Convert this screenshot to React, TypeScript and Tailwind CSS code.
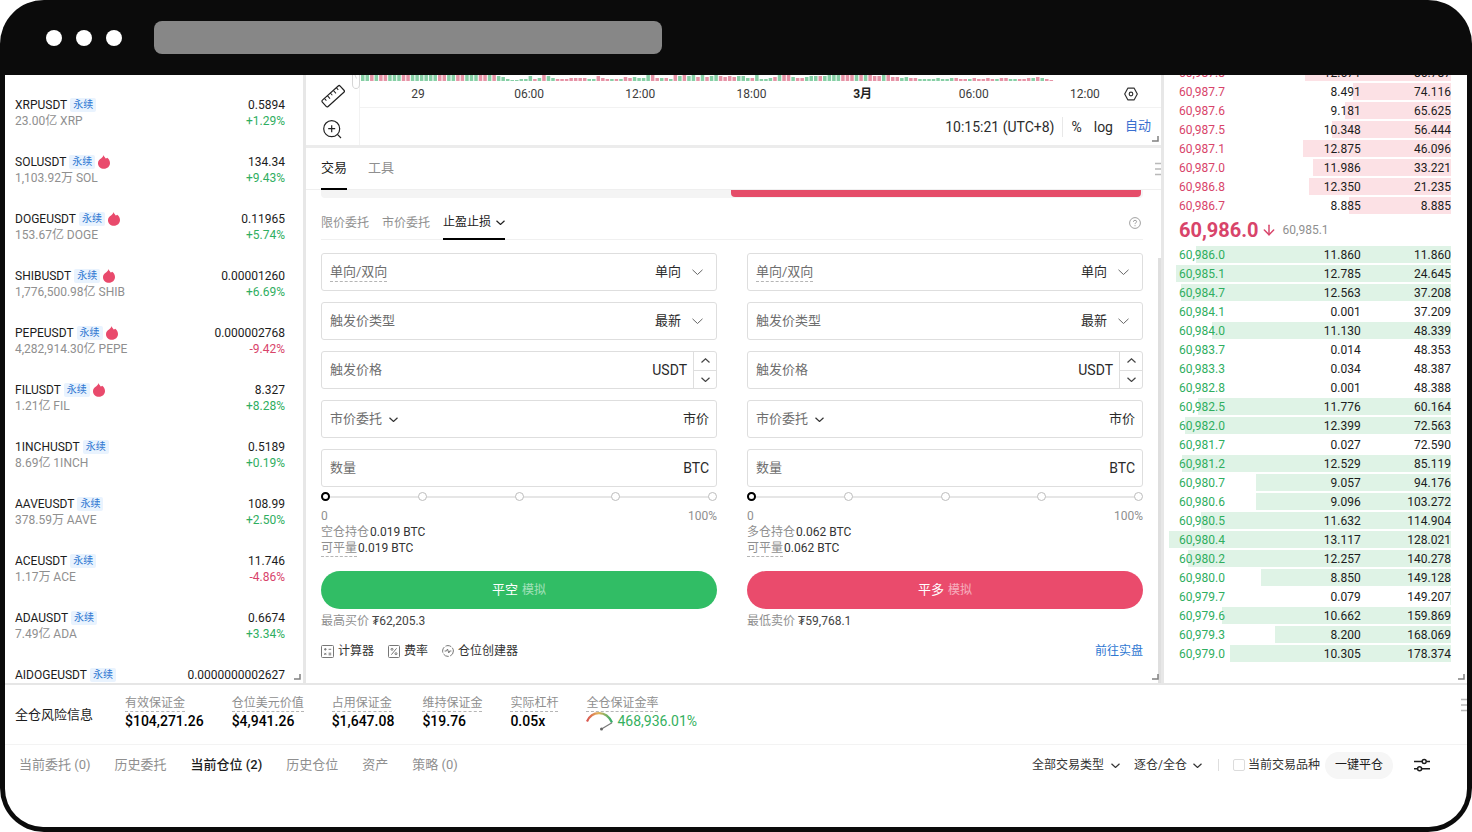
import { useId, useState } from 'react'
import { ArrowDown } from 'lucide-react'

interface Ticker {
  symbol: string
  volume?: string
  price: string
  change?: string
  hot?: boolean
}

const TICKERS: Ticker[] = [
  { symbol: 'XRPUSDT', volume: '23.00亿 XRP', price: '0.5894', change: '+1.29%' },
  { symbol: 'SOLUSDT', volume: '1,103.92万 SOL', price: '134.34', change: '+9.43%', hot: true },
  { symbol: 'DOGEUSDT', volume: '153.67亿 DOGE', price: '0.11965', change: '+5.74%', hot: true },
  { symbol: 'SHIBUSDT', volume: '1,776,500.98亿 SHIB', price: '0.00001260', change: '+6.69%', hot: true },
  { symbol: 'PEPEUSDT', volume: '4,282,914.30亿 PEPE', price: '0.000002768', change: '-9.42%', hot: true },
  { symbol: 'FILUSDT', volume: '1.21亿 FIL', price: '8.327', change: '+8.28%', hot: true },
  { symbol: '1INCHUSDT', volume: '8.69亿 1INCH', price: '0.5189', change: '+0.19%' },
  { symbol: 'AAVEUSDT', volume: '378.59万 AAVE', price: '108.99', change: '+2.50%' },
  { symbol: 'ACEUSDT', volume: '1.17万 ACE', price: '11.746', change: '-4.86%' },
  { symbol: 'ADAUSDT', volume: '7.49亿 ADA', price: '0.6674', change: '+3.34%' },
  { symbol: 'AIDOGEUSDT', price: '0.0000000002627' },
]

type Level = [price: string, amount: string, total: string]

const ASKS: Level[] = [
  ['60,987.8', '12.671', '86.787'],
  ['60,987.7', '8.491', '74.116'],
  ['60,987.6', '9.181', '65.625'],
  ['60,987.5', '10.348', '56.444'],
  ['60,987.1', '12.875', '46.096'],
  ['60,987.0', '11.986', '33.221'],
  ['60,986.8', '12.350', '21.235'],
  ['60,986.7', '8.885', '8.885'],
]

const BIDS: Level[] = [
  ['60,986.0', '11.860', '11.860'],
  ['60,985.1', '12.785', '24.645'],
  ['60,984.7', '12.563', '37.208'],
  ['60,984.1', '0.001', '37.209'],
  ['60,984.0', '11.130', '48.339'],
  ['60,983.7', '0.014', '48.353'],
  ['60,983.3', '0.034', '48.387'],
  ['60,982.8', '0.001', '48.388'],
  ['60,982.5', '11.776', '60.164'],
  ['60,982.0', '12.399', '72.563'],
  ['60,981.7', '0.027', '72.590'],
  ['60,981.2', '12.529', '85.119'],
  ['60,980.7', '9.057', '94.176'],
  ['60,980.6', '9.096', '103.272'],
  ['60,980.5', '11.632', '114.904'],
  ['60,980.4', '13.117', '128.021'],
  ['60,980.2', '12.257', '140.278'],
  ['60,980.0', '8.850', '149.128'],
  ['60,979.7', '0.079', '149.207'],
  ['60,979.6', '10.662', '159.869'],
  ['60,979.3', '8.200', '168.069'],
  ['60,979.0', '10.305', '178.374'],
]

const TIMES = ['29', '06:00', '12:00', '18:00', '3月', '06:00', '12:00']

// one letter per candle for the colour, one digit for the visible height
const VOLUME_COLORS =
  'ggrgrrgggrrggggggrrggrrgggrrgrg' +
  'gggggggrgrggrrrrrrrggrrrgrgrrggggrrgrgrgrggrgrggrrrr' +
  'gggrggggrgrrgrrgggrggggrrrgrgrrrgrrrggrrggggggggrrrgrrrrrgrrggrrrgrgrr'
const VOLUME_HEIGHTS =
  '6666666666666666666666666666665' +
  '4211225236532223333225322224343366333265656464565454' +
  '5533622346664334555566666666665566443433222232233222322322332222334321'

const RISKS = [
  { label: '有效保证金', value: '$104,271.26' },
  { label: '仓位美元价值', value: '$4,941.26' },
  { label: '占用保证金', value: '$1,647.08' },
  { label: '维持保证金', value: '$19.76' },
  { label: '实际杠杆', value: '0.05x' },
]

const POSITION_TABS = ['当前委托 (0)', '历史委托', '当前仓位 (2)', '历史仓位', '资产', '策略 (0)']

function Caret({ up, wide, className }: { up?: boolean; wide?: boolean; className?: string }) {
  const w = wide ? 11 : 9
  const drop = wide ? 5 : 4
  const d = up ? `M.5 ${drop + 0.5}L${w / 2} .8L${w - 0.5} ${drop + 0.5}` : `M.5 .8L${w / 2} ${drop + 0.5}L${w - 0.5} .8`
  return (
    <svg
      className={className}
      width={w}
      height={drop + 1}
      viewBox={`0 0 ${w} ${drop + 1}`}
      fill="none"
      stroke="currentColor"
      strokeWidth={wide ? 1 : 1.2}
      aria-hidden="true"
    >
      <path d={d} />
    </svg>
  )
}

function Flame() {
  return (
    <svg width="12" height="14" viewBox="0 0 12 14" fill="#e94a6c" aria-hidden="true">
      <path d="M5.6 0C5.8 1.4 6.8 2.3 7.7 3.4C8.3 3.4 8.800 3.100 9.200 2.700C10.900 4 12 5.900 12 8C12 11.300 9.300 13.800 6 13.800C2.700 13.800 0 11.400 0 8.200C0 6.200 1 5 2.300 4C3.700 2.900 5.200 1.900 5.600 0Z" />
    </svg>
  )
}

function ResizeCorner() {
  return (
    <svg className="absolute right-[2px] bottom-[3px]" width="7" height="6" viewBox="0 0 7 6" fill="none" stroke="#808080" strokeWidth="1.5" aria-hidden="true">
      <path d="M0 5H6V0" />
    </svg>
  )
}

function DragHandle() {
  return (
    <svg width="6" height="14" viewBox="0 0 6 14" stroke="#b9b9b9" strokeWidth="1.4" aria-hidden="true">
      <path d="M0 1.5H6M0 7H6M0 12.5H6" />
    </svg>
  )
}

function TickerList() {
  return (
    <aside className="relative w-[301px] shrink-0 border-r-3 border-[#e7e7e7] pt-[10px]">
      <ul className="text-xs leading-4">
        {TICKERS.map((t) => (
          <li key={t.symbol} className={`flex justify-between pr-[18px] pl-[10px] pt-3 ${t.volume ? 'h-[57px]' : ''}`}>
            <div>
              <div className="flex h-4 items-center gap-[3px]">
                <span>{t.symbol}</span>
                <span className="h-[14px] rounded-xs bg-[#e9f3fe] px-[3px] text-[10px] leading-[14px] text-[#2f78d2]">永续</span>
                {t.hot && <Flame />}
              </div>
              {t.volume && <div className="h-4 text-[#8f8f8f]">{t.volume}</div>}
            </div>
            <div className="text-right">
              <div>{t.price}</div>
              {t.change && (
                <div className={t.change.startsWith('+') ? 'text-[#2fae5f]' : 'text-[#d8446a]'}>{t.change}</div>
              )}
            </div>
          </li>
        ))}
      </ul>
      <ResizeCorner />
    </aside>
  )
}

function ChartFooter() {
  return (
    <section className="relative flex h-[73px] border-b-3 border-[#ececec]">
      <div className="flex w-[54px] shrink-0 flex-col items-center gap-3 border-r border-[#f2f2f2] pt-[9px]">
        <button type="button" aria-label="测量">
          <svg width="24" height="24" viewBox="0 0 24 24" fill="none" stroke="#222" strokeWidth="1.2">
            <g transform="rotate(-42 12 12)">
              <rect x="0" y="8" width="24" height="8.5" rx="1.4" />
              <path d="M4 8V11M8 8V12M12 8V11M16 8V12M20 8V11" strokeWidth="1" />
            </g>
          </svg>
        </button>
        <button type="button" aria-label="放大">
          <svg width="19" height="19" viewBox="0 0 19 19" fill="none" stroke="#222" strokeWidth="1.2">
            <circle cx="8.7" cy="8.7" r="8" />
            <path d="M8.700 5.200V12.200M5.200 8.700H12.200M14.400 14.400L18 18" />
          </svg>
        </button>
      </div>
      <svg className="absolute top-0 left-[46px]" width="8" height="14" viewBox="0 0 8 14" fill="none" stroke="#d5d5d5" aria-hidden="true">
        <path d="M.5 0V9Q.5 13.5 4 13.5Q7.5 13.5 7.5 9V0M3 0L4.5 3.5" />
      </svg>
      <div className="flex min-w-0 flex-1 flex-col">
        <div className="h-[33px] border-b border-[#f2f2f2]">
          <svg className="block h-[6px] w-full" viewBox="0 0 801 6" preserveAspectRatio="none" aria-hidden="true">
            {VOLUME_COLORS.split('').map((c, i) => {
              const h = Number(VOLUME_HEIGHTS[i] ?? 2)
              return (
                <rect key={i} x={1 + i * 4.53} y={6 - h} width="3.5" height={h} fill={c === 'g' ? '#86cfa5' : '#e693a6'} />
              )
            })}
          </svg>
          <div className="flex h-[26px] items-center pr-[23px] pl-[42px] text-xs leading-4 text-[#3c3c3c]">
            <div className="flex flex-1 justify-between">
              {TIMES.map((time, i) => (
                <span key={i} className={`flex w-8 justify-center ${time === '3月' ? 'font-bold text-[#222]' : ''}`}>
                  {time}
                </span>
              ))}
            </div>
            <button type="button" aria-label="设置" className="ml-[23px]">
              <svg width="14" height="14" viewBox="0 0 14 14" fill="none" stroke="#333" strokeWidth="1.2">
                <path d="M3.800 1.200H10.200L13.300 7L10.200 12.800H3.800L.7 7Z" strokeLinejoin="round" />
                <circle cx="7" cy="7" r="1.8" />
              </svg>
            </button>
          </div>
        </div>
        <div className="flex flex-1 items-center justify-end pr-[10px] text-sm text-[#2c2c2c]">
          <span>10:15:21 (UTC+8)</span>
          <span className="mx-2 h-5 w-px bg-[#e8e8e8]" />
          <button type="button">%</button>
          <button type="button" className="ml-3">log</button>
          <button type="button" className="ml-3 text-[13px] text-[#3a6fd0]">自动</button>
        </div>
      </div>
      <ResizeCorner />
    </section>
  )
}

const FIELD = 'flex h-[38px] items-center rounded-[3px] border border-[#dedede] pl-2 text-[13px] text-[#6e6e6e]'

function SelectField({ label, value, dotted }: { label: string; value: string; dotted?: boolean }) {
  const id = useId()
  return (
    <div className={`${FIELD} justify-between pr-[13px]`}>
      <label htmlFor={id} className={`leading-[18px] ${dotted ? 'border-b border-dashed border-[#b5b5b5]' : ''}`}>
        {label}
      </label>
      <div className="flex items-center">
        <select id={id} className="appearance-none bg-transparent pr-[22px] text-[#2a2a2a] outline-none">
          <option>{value}</option>
        </select>
        <Caret wide className="pointer-events-none -ml-3 text-[#666]" />
      </div>
    </div>
  )
}

function PositionSlider({ label }: { label: string }) {
  const [value, setValue] = useState(0)
  return (
    <div>
      <div className="relative mt-[5px] flex h-[9px] items-center">
        <span className="mx-1 h-[2px] flex-1 bg-[#e6e6e6]" />
        <div className="absolute inset-0 flex justify-between">
          {[0, 25, 50, 75, 100].map((stop) => (
            <span key={stop} className="h-[9px] w-[9px] rounded-full border border-[#bdbdbd] bg-white" />
          ))}
        </div>
        <input
          type="range"
          aria-label={label}
          value={value}
          onChange={(e) => setValue(Number(e.target.value))}
          className="absolute inset-0 h-[9px] w-full appearance-none bg-transparent outline-none [&::-webkit-slider-thumb]:h-[9px] [&::-webkit-slider-thumb]:w-[9px] [&::-webkit-slider-thumb]:appearance-none [&::-webkit-slider-thumb]:rounded-full [&::-webkit-slider-thumb]:border-2 [&::-webkit-slider-thumb]:border-black [&::-webkit-slider-thumb]:bg-white"
        />
      </div>
      <div className="mt-[7px] flex justify-between text-xs leading-4 text-[#8f8f8f]">
        <span>0</span>
        <span>100%</span>
      </div>
    </div>
  )
}

interface OrderFormProps {
  holding: string
  amount: string
  action: string
  limitLabel: string
  limit: string
  color: string
}

function OrderForm({ holding, amount, action, limitLabel, limit, color }: OrderFormProps) {
  const id = useId()
  return (
    <form onSubmit={(e) => e.preventDefault()}>
      <div className="flex flex-col gap-[11px]">
        <SelectField label="单向/双向" value="单向" dotted />
        <SelectField label="触发价类型" value="最新" />
        <div className={FIELD}>
          <label htmlFor={`${id}-price`}>触发价格</label>
          <input id={`${id}-price`} type="text" inputMode="decimal" className="min-w-0 flex-1 px-2 outline-none" />
          <span className="pr-[6px] text-sm text-[#2a2a2a]">USDT</span>
          <div className="flex h-full w-[23px] flex-col divide-y divide-[#dedede] border-l border-[#dedede] text-[#444]">
            <button type="button" aria-label="增加" className="flex flex-1 items-center justify-center">
              <Caret up />
            </button>
            <button type="button" aria-label="减少" className="flex flex-1 items-center justify-center">
              <Caret />
            </button>
          </div>
        </div>
        <div className={`${FIELD} pr-[7px]`}>
          <select aria-label="委托类型" className="appearance-none bg-transparent pr-[22px] outline-none">
            <option>市价委托</option>
          </select>
          <Caret className="pointer-events-none -ml-4 text-[#333]" />
          <span className="ml-auto text-[#2a2a2a]">市价</span>
        </div>
        <div className={`${FIELD} pr-[7px]`}>
          <label htmlFor={`${id}-size`}>数量</label>
          <input id={`${id}-size`} type="text" inputMode="decimal" className="min-w-0 flex-1 px-2 outline-none" />
          <span className="text-sm text-[#2a2a2a]">BTC</span>
        </div>
      </div>
      <PositionSlider label={`${action}数量比例`} />
      <div className="text-xs leading-4 text-[#333]">
        <div className="flex h-4 gap-px">
          <span className="text-[#8f8f8f]">{holding}</span>
          <span>{amount}</span>
        </div>
        <div className="flex h-4 gap-px">
          <span className="h-[17px] border-b border-dashed border-[#b5b5b5] text-[#8f8f8f]">可平量</span>
          <span>{amount}</span>
        </div>
      </div>
      <button type="submit" className={`mt-[15px] flex h-[38px] w-full items-center justify-center gap-1 rounded-full text-[13px] text-white ${color}`}>
        {action}
        <span className="text-xs text-white/55">模拟</span>
      </button>
      <div className="mt-1 text-xs leading-4 text-[#444]">
        <span className="text-[#8f8f8f]">{limitLabel}</span> {limit}
      </div>
    </form>
  )
}

function TradePanel() {
  return (
    <section className="relative flex-1">
      <nav className="flex h-[42px] gap-[21px] border-b border-[#efefef] pl-[15px] text-[13px]">
        <button type="button" className="-mb-px border-b-2 border-black">交易</button>
        <button type="button" className="pb-px text-[#8f8f8f]">工具</button>
      </nav>
      <div className="absolute top-[14px] right-0 flex">
        <DragHandle />
      </div>
      <div className="pr-[18px] pl-[15px]">
        <div className="grid h-2 grid-cols-2 rounded-b bg-[#f4f4f4] pr-[2px]">
          <span className="col-start-2 h-[7px] rounded-b bg-[#e54d69]" />
        </div>
        <nav className="mt-2 flex h-[34px] gap-[13px] border-b border-[#f0f0f0] text-xs text-[#8f8f8f]">
          <button type="button">限价委托</button>
          <button type="button">市价委托</button>
          <button type="button" className="-mb-px flex items-center gap-[5px] border-b-2 border-black text-[#222]">
            止盈止损
            <Caret />
          </button>
          <button type="button" aria-label="帮助" className="ml-auto pr-[2px]">
            <svg width="12" height="12" viewBox="0 0 12 12" fill="none" stroke="#a0a0a0">
              <circle cx="6" cy="6" r="5.4" />
              <path d="M4.4 4.8Q4.5 3.3 6 3.3Q7.6 3.3 7.6 4.7Q7.6 5.5 6.600 6Q6 6.300 6 7.100M6 8.200V9.200" />
            </svg>
          </button>
        </nav>
        <div className="mt-[13px] grid grid-cols-2 gap-[30px]">
          <OrderForm holding="空仓持仓" amount="0.019 BTC" action="平空" limitLabel="最高买价" limit="₮62,205.3" color="bg-[#31bd65]" />
          <OrderForm holding="多仓持仓" amount="0.062 BTC" action="平多" limitLabel="最低卖价" limit="₮59,768.1" color="bg-[#ea4b6c]" />
        </div>
        <div className="mt-[14px] flex h-4 items-center gap-[14px] text-xs text-[#333]">
          <button type="button" className="flex items-center gap-1">
            <svg width="13" height="13" viewBox="0 0 13 13" fill="none" stroke="#777">
              <rect x=".5" y=".5" width="12" height="12" rx="1" />
              <path d="M3 4.300H5.600M4.300 3V5.600M7.600 4.300H10.200M3.300 7.900L5.300 9.900M5.300 7.900L3.300 9.900M7.600 8.200H10.200M7.600 9.800H10.200" />
            </svg>
            计算器
          </button>
          <button type="button" className="flex items-center gap-1">
            <svg width="12" height="13" viewBox="0 0 12 13" fill="none" stroke="#777">
              <rect x=".5" y=".5" width="11" height="12" rx="1" />
              <path d="M8.600 3.300L3.400 9.700" />
              <circle cx="4" cy="4.3" r="1" />
              <circle cx="8" cy="8.7" r="1" />
            </svg>
            费率
          </button>
          <button type="button" className="flex items-center gap-1">
            <svg width="12" height="12" viewBox="0 0 12 12" fill="none" stroke="#777">
              <circle cx="6" cy="6" r="5.4" strokeDasharray="6 1.4" />
              <path d="M2.600 6H4.500L5.500 4L6.800 8L7.600 6H9.400" />
            </svg>
            仓位创建器
          </button>
          <a href="#live" className="ml-auto text-[#2f78d2]">前往实盘</a>
        </div>
      </div>
      <span className="absolute top-[110px] right-0 bottom-0 w-[3px] bg-[#dfdfdf]" />
      <ResizeCorner />
    </section>
  )
}

function LevelRow({ level, side }: { level: Level; side: 'ask' | 'bid' }) {
  const [price, amount, total] = level
  const ask = side === 'ask'
  const width = Number(amount) * (ask ? 4.08 : 7.62)
  const fill = ask ? '#fce1e5' : '#dff3e6'
  return (
    <tr
      className="h-[19px] bg-[length:100%_17px] bg-center bg-no-repeat"
      style={{ backgroundImage: `linear-gradient(to left, ${fill} ${width}%, transparent ${width}%)` }}
    >
      <td className={`pl-[10px] ${ask ? 'text-[#d8446a]' : 'text-[#2fae5f]'}`}>{price}</td>
      <td className="text-right">{amount}</td>
      <td className="text-right">{total}</td>
    </tr>
  )
}

function OrderBook() {
  return (
    <aside className="relative w-[306px] shrink-0 overflow-hidden border-l-3 border-[#e7e7e7] pr-4 pl-[5px]">
      {/* the book is scrolled, so the furthest ask is only partly in view */}
      <table className="-mt-3 w-full table-fixed text-xs leading-4 text-[#1c1c1c]">
        <colgroup>
          <col className="w-[34%]" />
          <col className="w-[34%]" />
          <col className="w-[32%]" />
        </colgroup>
        <tbody>
          {ASKS.map((level) => (
            <LevelRow key={level[0]} level={level} side="ask" />
          ))}
          <tr className="h-[30px]">
            <td colSpan={3} className="pl-[10px]">
              <div className="flex items-center">
                <strong className="text-xl leading-6 font-bold text-[#d8446a]">60,986.0</strong>
                <ArrowDown className="ml-[2px] text-[#d8446a]" size={16} strokeWidth={2.2} />
                <span className="ml-[6px] text-[#8f8f8f]">60,985.1</span>
              </div>
            </td>
          </tr>
          {BIDS.map((level) => (
            <LevelRow key={level[0]} level={level} side="bid" />
          ))}
        </tbody>
      </table>
      <ResizeCorner />
    </aside>
  )
}

function RiskBar() {
  return (
    <section className="relative flex h-[60px] border-b border-[#f3f3f3] pl-[10px]">
      <h2 className="w-[110px] self-center text-[13px]">全仓风险信息</h2>
      <dl className="flex gap-7 pt-[10px]">
        {RISKS.map((r) => (
          <div key={r.label} className="flex flex-col items-start">
            <dt className="border-b border-dashed border-[#b5b5b5] text-xs leading-4 text-[#8f8f8f]">{r.label}</dt>
            <dd className="text-sm leading-[18px] font-medium text-black">{r.value}</dd>
          </div>
        ))}
        <div className="flex flex-col items-start">
          <dt className="border-b border-dashed border-[#b5b5b5] text-xs leading-4 text-[#8f8f8f]">全仓保证金率</dt>
          <dd className="flex gap-1 text-sm leading-[18px] text-[#35b05e]">
            <svg width="27" height="19" viewBox="0 0 27 19" fill="none" aria-hidden="true">
              <defs>
                <linearGradient id="gauge">
                  <stop offset="0" stopColor="#d9534f" />
                  <stop offset=".45" stopColor="#e2b35a" />
                  <stop offset="1" stopColor="#2fae6b" />
                </linearGradient>
              </defs>
              <path d="M1 9.500C6-1.500 20-2 26 10.500" stroke="url(#gauge)" strokeWidth="2.2" />
              <path d="M15.500 17L26 10.800" stroke="#777" strokeWidth="1.2" />
              <circle cx="15.5" cy="17" r="1.5" fill="#666" />
            </svg>
            468,936.01%
          </dd>
        </div>
      </dl>
      <div className="absolute top-[13px] right-0 flex">
        <DragHandle />
      </div>
    </section>
  )
}

function FilterSelect({ label, value }: { label: string; value: string }) {
  return (
    <div className="flex items-center">
      <select aria-label={label} className="appearance-none bg-transparent pr-[18px] outline-none">
        <option>{value}</option>
      </select>
      <Caret className="pointer-events-none -ml-3" />
    </div>
  )
}

function PositionBar() {
  const [tab, setTab] = useState('当前仓位 (2)')
  return (
    <section className="flex h-10 items-center pr-[37px] pl-[14px]">
      <nav className="flex gap-6 text-[13px]">
        {POSITION_TABS.map((name) => (
          <button
            key={name}
            type="button"
            onClick={() => setTab(name)}
            className={name === tab ? 'font-medium text-[#1c1c1c]' : 'text-[#8f8f8f]'}
          >
            {name}
          </button>
        ))}
      </nav>
      <div className="ml-auto flex items-center text-xs text-[#333]">
        <div className="flex gap-[14px]">
          <FilterSelect label="交易类型" value="全部交易类型" />
          <FilterSelect label="仓位模式" value="逐仓/全仓" />
        </div>
        <span className="ml-4 h-3 w-px bg-[#dedede]" />
        <label className="ml-[14px] flex items-center gap-[3px]">
          <input type="checkbox" className="h-3 w-3 appearance-none rounded-xs border border-[#dcdcdc] bg-white checked:bg-[#333]" />
          当前交易品种
        </label>
        <button type="button" className="ml-[5px] h-[27px] rounded-full bg-[#f6f6f6] px-[10px] text-[#1c1c1c]">
          一键平仓
        </button>
        <button type="button" aria-label="筛选" className="ml-[21px]">
          <svg width="16" height="14" viewBox="0 0 16 14" fill="none" stroke="#1c1c1c" strokeWidth="1.5">
            <path d="M0 3.500H8M12.400 3.500H16M0 10.800H3.400M7.800 10.800H16" />
            <circle cx="10.2" cy="3.5" r="2" />
            <circle cx="5.6" cy="10.8" r="2" />
          </svg>
        </button>
      </div>
    </section>
  )
}

export default function App() {
  return (
    <div className="min-h-screen bg-white font-['Roboto','Noto_Sans_CJK_SC',sans-serif] text-[#1c1c1c]">
      <div className="flex min-h-screen flex-col rounded-[44px] bg-[#0b0b0b] px-[5px] pb-[5px]">
        <header className="flex h-[75px] shrink-0 items-center gap-[14px] pl-[41px]">
          <span className="h-4 w-4 rounded-full bg-white" />
          <span className="h-4 w-4 rounded-full bg-white" />
          <span className="h-4 w-4 rounded-full bg-white" />
          <span className="ml-[18px] h-[33px] w-[508px] rounded-lg bg-[#878787]" />
        </header>
        <main className="flex flex-1 flex-col overflow-hidden rounded-b-[38px] bg-white">
          <div className="flex border-b-2 border-[#e6e6e6]">
            <TickerList />
            <div className="flex min-w-0 flex-1 flex-col">
              <ChartFooter />
              <TradePanel />
            </div>
            <OrderBook />
          </div>
          <RiskBar />
          <PositionBar />
        </main>
      </div>
    </div>
  )
}
